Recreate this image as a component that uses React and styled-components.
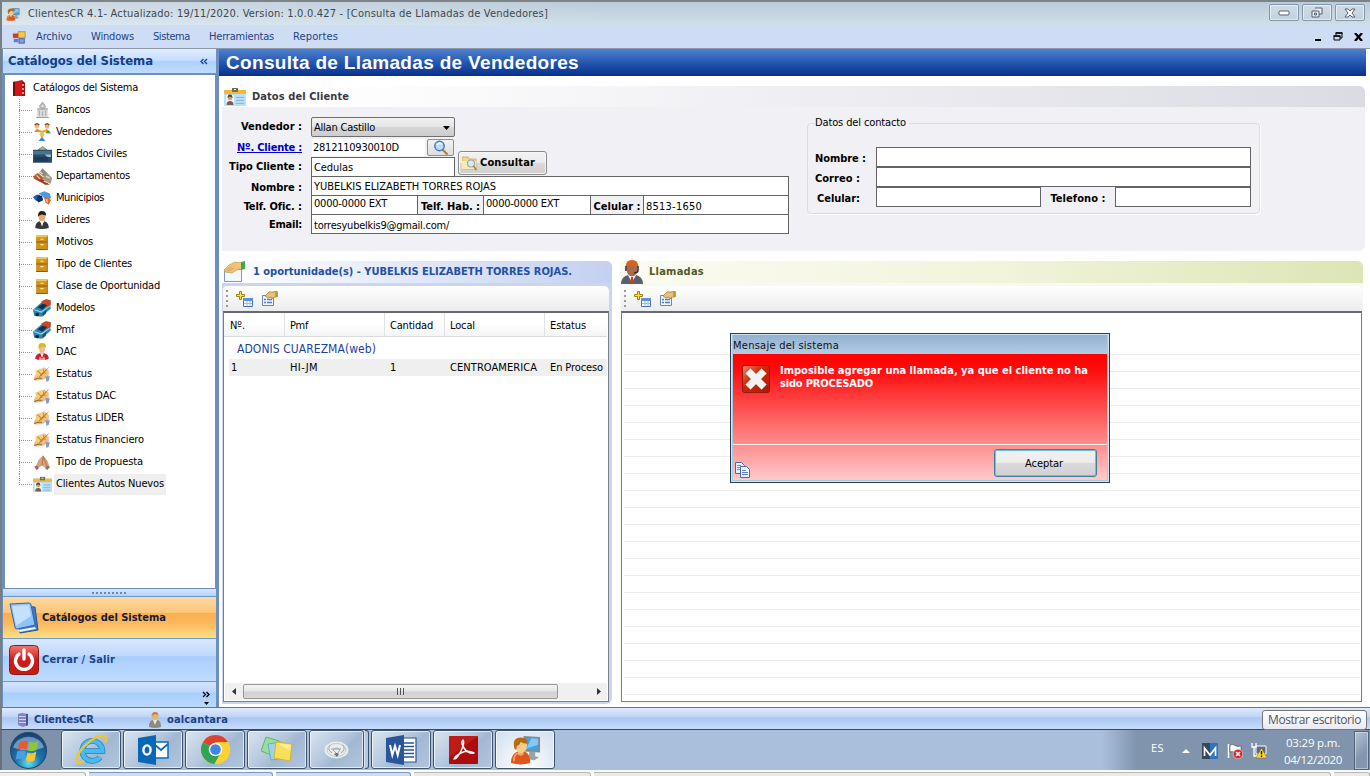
import React, { useLayoutEffect, useRef } from "react";
import styled, { createGlobalStyle, css } from "styled-components";

const Global = createGlobalStyle`
  * { box-sizing: border-box; }
  html, body { margin: 0; padding: 0; overflow: hidden; background: #fff; }
  body { font-family: "DejaVu Sans Condensed", "DejaVu Sans", "Noto Sans", sans-serif; font-size: 11px; color: #000; }
  svg { display: block; flex: none; }
`;

/* ---------- text ---------- */
const Label = styled.span`
  display: inline-block;
  flex: none;
  white-space: pre;
  line-height: ${(p) => p.$lh || 14}px;
  font-size: ${(p) => p.$size || 11}px;
  font-weight: ${(p) => (p.$bold ? 700 : 400)};
  color: ${(p) => p.$color || "#000"};
  ${(p) => p.$font && css`font-family: ${p.$font};`}
  ${(p) => p.$link && css`text-decoration: underline;`}
`;

/* Tracks the text so that it takes the given width. */
function T({ w, children, size, bold, color, font, link, lh }) {
  const ref = useRef(null);
  useLayoutEffect(() => {
    const el = ref.current;
    if (!w || !el) return;
    el.style.letterSpacing = "0px";
    const natural = el.getBoundingClientRect().width;
    el.style.letterSpacing = `${(w - natural) / el.textContent.length}px`;
  }, [w]);
  return (
    <Label ref={ref} $size={size} $bold={bold} $color={color} $font={font} $link={link} $lh={lh}>
      {children}
    </Label>
  );
}

/* ---------- frame ---------- */
const Screen = styled.div`
  position: relative;
  width: 1370px;
  height: 776px;
  overflow: hidden;
  display: flex;
  flex-direction: column;
  background: #fff;
`;
const TitleBar = styled.header`
  flex: none;
  height: 25px;
  border-top: 2px solid #7d8489;
  border-left: 2px solid #777f86;
  padding: 0 5px 0 4px;
  display: flex;
  align-items: center;
  gap: 8px;
  background: linear-gradient(90deg, rgba(255,255,255,.28), rgba(255,255,255,0) 45%), linear-gradient(#bccbd9, #cfdfe9);
`;
const Grow = styled.div`flex: 1; min-width: 0;`;
const WinButtons = styled.div`display: flex; gap: 3px; align-self: flex-start; padding-top: 2px;`;
const WinButton = styled.div`
  width: 30px;
  height: 17px;
  border: 1px solid #8496ac;
  border-radius: 2px;
  box-shadow: inset 0 0 0 1px rgba(255,255,255,.55);
  background: linear-gradient(#cfdbe6, #c3d1df);
  display: flex;
  align-items: center;
  justify-content: center;
`;
const MenuBar = styled.nav`
  flex: none;
  height: 24px;
  border-left: 2px solid #777f86;
  border-bottom: 1px solid #8d99ab;
  background: #cfddf4;
  display: flex;
  align-items: center;
  padding: 0 7px 0 10px;
`;
const MenuItems = styled.div`display: flex; gap: 19px; margin-left: 10px;`;
const MdiButtons = styled.div`display: flex; gap: 11px; align-items: center;`;
const Body = styled.div`flex: none; height: 658px; display: flex; border-left: 2px solid #777f86; background: #fff;`;

/* ---------- sidebar ---------- */
const Sidebar = styled.aside`
  width: 217px;
  flex: none;
  display: flex;
  flex-direction: column;
  background: #6d8fc0;
  padding: 0 3px 0 1px;
`;
const SideHeader = styled.div`
  height: 24px;
  display: flex;
  align-items: center;
  justify-content: space-between;
  padding: 0 8px 0 5px;
  background: linear-gradient(#e2eeff, #c3dcff 50%, #add1ff 52%, #bfdcff);
`;
const Tree = styled.div`
  height: 513px;
  margin: 2px 1px 1px 2px;
  background: #fff;
  padding: 2px 0 0 7px;
`;
const TreeRoot = styled.div`display: flex; align-items: center; height: 22px; gap: 7px;`;
const TreeItem = styled.div`
  display: flex;
  align-items: center;
  height: 22px;
  margin-left: 7px;
  background:
    linear-gradient(90deg, #909090 50%, transparent 50%) 0 11px / 2px 1px repeat-x,
    linear-gradient(#909090 50%, transparent 50%) 0 0 / 1px 2px repeat-y;
  ${(p) => p.$last && css`background: linear-gradient(90deg, #909090 50%, transparent 50%) 0 11px / 2px 1px repeat-x;`}
`;
const TreeStub = styled.div`
  width: 13px;
  align-self: stretch;
  ${(p) => p.$last && css`border-left: 1px dotted #909090; height: 12px;`}
`;
const TreeBody = styled.div`flex: 1; height: 22px; background: #fff; display: flex; align-items: center;`;
const TreeText = styled.div`
  display: flex;
  align-items: center;
  height: 21px;
  margin-left: 2px;
  padding: 0 2px;
  background: ${(p) => (p.$on ? "#efefef" : "transparent")};
`;
const Splitter = styled.div`
  height: 7px;
  background: linear-gradient(#d9e8ff, #b4d2fb);
  display: flex;
  align-items: center;
  justify-content: center;
`;
const Grip = styled.div`
  width: 35px;
  height: 2px;
  background: repeating-linear-gradient(90deg, #6c88b8 0 2px, transparent 2px 4px);
`;
const NavButton = styled.div`
  height: ${(p) => p.$h}px;
  border-top: 1px solid #6e97cb;
  display: flex;
  align-items: center;
  gap: 3px;
  padding-left: 6px;
  background: ${(p) =>
    p.$on
      ? "linear-gradient(#fbd9a4, #fdc578 38%, #fcae4e 40%, #fcb95c 65%, #fbe087)"
      : "linear-gradient(#dbe9fe, #bfd8fc 40%, #a9cefd 42%, #bfdcff)"};
`;
const NavOverflow = styled.div`
  flex: 1;
  border-top: 1px solid #6e97cb;
  display: flex;
  justify-content: flex-end;
  align-items: flex-end;
  padding: 0 6px 2px;
  background: linear-gradient(#d3e4fd, #bcd7fc 40%, #a9cefd 44%, #badafd);
`;

/* ---------- main ---------- */
const Main = styled.main`flex: 1; min-width: 0; padding-right: 4px; display: flex; flex-direction: column;`;
const Banner = styled.div`
  height: 27px;
  flex: none;
  padding: 0 7px;
  display: flex;
  align-items: center;
  background: linear-gradient(#4c80cf, #1f4fa8 60%, #07308c);
`;
const ClientPanel = styled.section`
  height: 165px;
  flex: none;
  margin: 10px 1px 0 3px;
  background: #f0f0f5;
  border-radius: 0 6px 6px 0;
  display: flex;
  flex-direction: column;
`;
const SectionHead = styled.div`
  height: ${(p) => p.$h || 21}px;
  flex: none;
  padding-left: ${(p) => p.$in ?? 1}px;
  display: flex;
  align-items: center;
  gap: 6px;
  border-radius: 0 6px 0 0;
  background: ${(p) => p.$bg};
`;
const FormArea = styled.div`flex: 1; display: flex; padding-top: 9px; padding-left: 9px;`;
const ClientForm = styled.div`width: 558px; display: flex; flex-direction: column;`;
const TopRows = styled.div`display: flex; height: 60px;`;
const Rows = styled.div`width: 224px;`;
const Row = styled.div`display: flex; height: ${(p) => p.$h}px;`;
const Caption = styled.div`
  width: 71px;
  margin-right: 9px;
  flex: none;
  display: flex;
  justify-content: flex-end;
  align-items: center;
  padding-top: ${(p) => p.$down || 0}px;
`;
const Select = styled.div`
  width: 144px;
  height: 20px;
  margin-top: 1px;
  border: 1px solid #6f6f6f;
  border-radius: 2px;
  background: linear-gradient(#f2f2f2, #e6e6e6 48%, #d6d6d6 52%, #cdcdcd);
  display: flex;
  align-items: center;
  justify-content: space-between;
  padding: 1px 4px 0 2px;
`;
const Field = styled.div`
  width: ${(p) => p.$w}px;
  height: ${(p) => p.$h || 20}px;
  flex: none;
  border: 1px solid ${(p) => (p.$plain ? "transparent" : "#646464")};
  background: #fff;
  background-clip: padding-box;
  display: flex;
  align-items: center;
  padding: ${(p) => p.$pad || "2px 0 0 2px"};
`;
const SmallButton = styled.div`
  width: 27px;
  height: 17px;
  margin: 1px 0 0 1px;
  border: 1px solid #8e8f8f;
  border-radius: 2px;
  background: linear-gradient(#f2f2f2, #dedede);
  display: flex;
  align-items: center;
  justify-content: center;
`;
const ConsultButton = styled.div`
  width: 89px;
  height: 24px;
  margin: 35px 0 0 3px;
  border: 1px solid #8a8a8a;
  border-radius: 3px;
  box-shadow: inset 0 0 0 1px #f7f7f7;
  background: linear-gradient(#f2f2f2, #ebebeb 48%, #dadada 52%, #cfcfcf);
  display: flex;
  align-items: center;
  gap: 2px;
  padding-left: 3px;
`;
const InlineCaption = styled.div`
  width: ${(p) => p.$w}px;
  height: 20px;
  flex: none;
  display: flex;
  align-items: center;
  justify-content: center;
  padding-top: 3px;
  border: solid #646464;
  border-width: ${(p) => (p.$bare ? "0" : "1px 0")};
`;
const ContactBox = styled.fieldset`
  width: 453px;
  height: 98px;
  margin: 0 0 0 18px;
  border: 1px solid #dcdde2;
  border-radius: 4px;
  box-shadow: 1px 1px 0 #fff;
  padding: 17px 0 0 7px;
  legend { padding: 0 3px 0 0; height: 14px; display: flex; }
`;
const ContactRow = styled.div`display: flex; height: 20px; `;
const ContactCaption = styled.div`width: 61px; padding: 5px 0 0 ${(p) => p.$in || 0}px;`;

const Panes = styled.div`flex: 1; display: flex; gap: 8px; margin: 10px 0 0 3px;`;
const DealPane = styled.section`
  width: 390px;
  height: 443px;
  border-radius: 0 6px 6px 0;
  background: #cbd5ef;
  padding-bottom: 2px;
  display: flex;
  flex-direction: column;
`;
const CallPane = styled.section`
  width: 743px;
  height: 443px;
  padding-bottom: 2px;
  display: flex;
  flex-direction: column;
  background: #f9f9f4;
`;
const Toolbar = styled.div`
  height: 25px;
  flex: none;
  margin: 3px ${(p) => p.$r || 3}px 0 1px;
  border-radius: 4px 5px 0 0;
  background: linear-gradient(#fff, #f5f5f5 50%, #ececec);
  display: flex;
  align-items: center;
  padding-left: 3px;
  gap: 8px;
`;
const Dots = styled.div`
  width: 2px;
  height: 17px;
  background: repeating-linear-gradient(#999 0 2px, transparent 2px 5px);
`;
const List = styled.div`
  flex: 1;
  margin: 0 ${(p) => p.$r || 3}px 0 1px;
  border: 1px solid #7b7e85;
  border-top: 2px solid #666a70;
  background: #fff;
  display: flex;
  flex-direction: column;
`;
const HeadRow = styled.div`
  height: 24px;
  margin-right: 1px;
  padding-left: 1px;
  display: flex;
  background: linear-gradient(#fff 45%, #f4f5f7);
  border-bottom: 1px solid #dcdcdc;
`;
const Cell = styled.div`
  width: ${(p) => p.$w}px;
  flex: none;
  overflow: hidden;
  display: flex;
  align-items: center;
  padding-left: ${(p) => p.$in ?? 5}px;
  padding-top: ${(p) => (p.$head ? 3 : 1)}px;
  border-right: 1px solid ${(p) => (p.$head && !p.$end ? "#e0e1e4" : "transparent")};
`;
const GroupRow = styled.div`height: 22px; padding: 1px 0 0 13px; display: flex; align-items: center;`;
const DataRow = styled.div`height: 17px; margin-left: 5px; margin-right: 1px; background: #efefef; display: flex;`;
const ScrollBar = styled.div`
  height: 17px;
  background: #f0f0f0;
  display: flex;
  align-items: center;
  margin: 0 1px 1px;
`;
const ScrollArrow = styled.div`width: 18px; display: flex; justify-content: center;`;
const Thumb = styled.div`
  width: 315px;
  height: 15px;
  border: 1px solid #979797;
  border-radius: 2px;
  background: linear-gradient(#f5f5f5, #e6e6e6 48%, #d2d2d2 52%, #d8d8d8);
  display: flex;
  align-items: center;
  justify-content: center;
`;
const Ruled = styled.div`
  flex: 1;
  margin: 41px 1px 5px 2px;
  background: repeating-linear-gradient(#ececec 0 1px, transparent 1px 17px);
`;

/* ---------- status and taskbar ---------- */
const StatusBar = styled.footer`
  flex: none;
  height: 23px;
  border-top: 1px solid #5c779f;
  border-left: 2px solid #777f86;
  border-bottom: 1px solid #33496a;
  background: linear-gradient(#e0ebfd, #c0d6f7 40%, #a9c7f2 48%, #c6dcfb);
  display: flex;
  align-items: center;
  padding: 3px 0 0 15px;
`;
const StatusItem = styled.div`display: flex; align-items: center; gap: ${(p) => p.$gap}px; width: ${(p) => p.$w}px;`;
const TaskBar = styled.div`
  flex: none;
  height: 40px;
  border-left: 2px solid #66707c;
  display: flex;
  background: linear-gradient(90deg, #7f92ab 0 59px, #a9c0dc 60px 1100px, #8094ae 1135px);
`;
const Start = styled.div`width: 59px; display: flex; justify-content: center; align-items: center; padding-right: 6px;`;
const TaskButton = styled.div`
  width: ${(p) => p.$w || 60}px;
  height: 39px;
  margin-right: ${(p) => p.$mr ?? 2}px;
  border: 1px solid #40536c;
  border-radius: 3px;
  box-shadow: inset 0 0 0 1px rgba(255,255,255,.65);
  background: ${(p) =>
    p.$active
      ? "radial-gradient(circle at 50% 90%, #fff, rgba(255,255,255,0) 90%), #d5e2f0"
      : "linear-gradient(135deg, #d9e4f0, #b4c7dd 45%, #a2b8d2 60%, #b2c6de)"};
  display: flex;
  align-items: center;
  justify-content: center;
`;
const StackEdge = styled.div`
  width: 5px;
  height: 39px;
  margin-right: 2px;
  border: 1px solid #40536c;
  border-left-color: #dbe6f2;
  border-radius: 0 3px 3px 0;
  background: #b5c8de;
`;
const Tray = styled.div`display: flex; align-items: center; color: #fff; padding-top: 1px;`;
const TrayIcon = styled.div`margin-left: ${(p) => p.$l}px; padding-bottom: ${(p) => p.$b || 0}px;`;
const Clock = styled.div`width: 66px; margin: 0 8px 0 13px; display: flex; flex-direction: column; align-items: center;`;
const PeekButton = styled.div`
  width: 15px;
  margin-right: 1px;
  height: 39px;
  border: 1px solid #51637b;
  box-shadow: inset 0 0 0 1px rgba(255,255,255,.4);
  background: linear-gradient(135deg, #b5c3d4, #8396ae 60%);
`;
const Strip = styled.div`
  flex: 1;
  border-top: 2px solid #f8f9fb;
  display: flex;
  gap: 3px;
  background: #fff;
`;
const StripTab = styled.div`
  width: ${(p) => p.$w}px;
  border-top: 1px solid ${(p) => p.$line};
  border-right: 1px solid ${(p) => p.$line};
  border-radius: 0 3px 0 0;
  background: ${(p) => p.$bg};
`;

/* ---------- overlays ---------- */
const Tip = styled.div`
  position: absolute;
  left: 1262px;
  top: 710px;
  width: 105px;
  height: 20px;
  border: 1px solid #767676;
  border-radius: 3px;
  background: linear-gradient(#fff, #e9eaf2);
  display: flex;
  align-items: center;
  padding-left: 5px;
`;
const Dialog = styled.div`
  position: absolute;
  left: 730px;
  top: 333px;
  width: 380px;
  height: 150px;
  border: 1px solid #2c3a49;
  background: #a5cbe2;
  box-shadow: inset 0 0 0 1px #cfe6f2;
  padding: 1px 2px 2px;
  display: flex;
  flex-direction: column;
`;
const DialogTitle = styled.div`
  height: 19px;
  display: flex;
  align-items: center;
  padding: 2px 0 0 0;
  background: linear-gradient(#93b0d1, #b2cce4);
`;
const DialogBody = styled.div`
  flex: 1;
  background: linear-gradient(#ff0000, #fe0b0b 12%, #ff8a8a 70%, #ffcaca);
  display: flex;
  flex-direction: column;
`;
const DialogMessage = styled.div`
  height: 91px;
  border-bottom: 1px solid #fff0f0;
  display: flex;
  padding: 11px 0 0 9px;
  gap: 10px;
`;
const MessageText = styled.div`display: flex; flex-direction: column; align-items: flex-start; margin-top: -1px;`;
const DialogFoot = styled.div`flex: 1; display: flex; justify-content: space-between; padding: 4px 10px 0 2px;`;
const AcceptButton = styled.div`
  width: 103px;
  height: 28px;
  border: 1px solid #3f7f9f;
  border-radius: 3px;
  box-shadow: inset 0 0 0 1px #5fc6e8;
  background: linear-gradient(#f3f3f3, #ebebeb 48%, #dadada 52%, #d0d0d0);
  display: flex;
  align-items: center;
  justify-content: center;
  padding: 1px 3px 0 0;
`;
const CopyIconSlot = styled.div`padding-top: 13px;`;

/* ---------- icons ---------- */
const Svg = ({ w = 16, h = w, v = 16, children }) => (
  <svg width={w} height={h} viewBox={typeof v === "string" ? v : `0 0 ${v} ${v}`}>{children}</svg>
);

const BookIcon = () => (
  <Svg w={14} h={17} v="0 0 14 17">
    <path d="M1 2 10 0v16H1z" fill="#d21518" />
    <path d="M1 2 3 1.500V16H1z" fill="#760b0c" />
    <path d="m10 0 3 3v13H10z" fill="#9c1412" />
    <path d="M11 4v2m0 2v2m0 2v2" stroke="#e8c9a0" strokeWidth="1.500" />
  </Svg>
);
const PcUser = ({ w = 16 }) => (
  <Svg w={w} v={32}>
    <path d="m14 2 17 1v16l-17-1z" fill="#7e8b95" />
    <path d="m16 4 13 1v12l-13-1z" fill="#43a3e6" />
    <path d="m22 4.500 7 .5v6l-12 4z" fill="#a5ddff" opacity=".65" />
    <path d="m20 18 6 0 0 5 4 1-5 3-6-1z" fill="#98a2a8" />
    <path d="M1 30q0-10 7-12h7q6 2 6 12-10 3-20 0" fill="#e0561c" />
    <path d="M4 28q0-7 4-8" stroke="#f79a5a" strokeWidth="2" fill="none" />
    <path d="M8 17h6v4q-3 3-6 0z" fill="#eeb16a" />
    <ellipse cx="11.500" cy="12" rx="6" ry="7.500" fill="#f8cd8a" />
    <path d="M5 16Q1 4 11 3.500q8 0 7 6.500-5 0-7-2-1 4-4 4l-.5 4z" fill="#b9690f" />
  </Svg>
);
const FormIcon = () => (
  <Svg w={14}>
    <rect x="7" y="2" width="8" height="7" fill="#f6c84c" stroke="#c48a16" />
    <rect x="1" y="4" width="6" height="5" fill="#cf3b28" />
    <rect x="2" y="10" width="5" height="4" fill="#5b7fd2" />
    <rect x="8" y="10" width="6" height="5" fill="#7fa0e8" stroke="#3759ad" />
  </Svg>
);
const BankIcon = () => (
  <Svg w={17}>
    <path d="M3 6 8 3l5 3v9H3z" fill="#dadadd" />
    <path d="M5 8v5m3-4v4m3-5v5" stroke="#a7a9b0" />
    <path d="m8 0 3 4-3 3-3-3z" fill="#bcbdc3" stroke="#90919a" strokeWidth=".6" />
    <path d="M3 6.500h10M2 14.500h12" stroke="#9c9ca2" />
    <circle cx="8" cy="4" r="1" fill="#eee" />
  </Svg>
);
const TeamIcon = () => (
  <Svg w={18}>
    <path d="M8 8 3 6m5 2 5-2M8 8v5" stroke="#e3a733" strokeWidth="2" />
    <circle cx="3.500" cy="3" r="2" fill="#f3b985" /><circle cx="12.500" cy="3" r="2" fill="#eeb280" />
    <path d="M1.500 2q2-2.500 4 0M10.500 2q2-2.500 4 0" stroke="#81501a" strokeWidth="1.300" fill="none" />
    <path d="M1 8q2.500-5 5 0z" fill="#d8912c" /><path d="M11 9q2-5 5 0z" fill="#4a9e3a" />
    <circle cx="8" cy="10" r="2" fill="#f1c15a" /><path d="M5 16q3-6 6 0z" fill="#3a8ad8" />
  </Svg>
);
const CaseIcon = () => (
  <Svg w={19}>
    <path d="M0 4h4l4-3 4 3h4v11H0z" fill="#2c4f68" />
    <path d="M0 5h15v3H0z" fill="#48758c" />
    <path d="m5 4 3-3 3 3z" fill="#a9b88b" />
    <path d="M10 8h5v2h-3z" fill="#9fc2cf" />
    <path d="M1 10h12v4H1z" fill="#1d3a5c" />
  </Svg>
);
const HousesIcon = () => (
  <Svg w={19}>
    <path d="m0 8 4-3 5 4-2 4-6-3z" fill="#b7552f" /><path d="m5 5 3-4 4 4v5z" fill="#8f8b78" />
    <path d="m8 9 4-4 4 4-1 5-6-2z" fill="#a89a86" />
    <path d="m3 10 6 1 5 4-4 0z" fill="#9c3a27" /><path d="M6 4l2 2m3 2 3 1" stroke="#ece3c8" />
    <path d="M3 7l3 3m3 2 3 1" stroke="#f0d7ac" />
  </Svg>
);
const CarsIcon = () => (
  <Svg w={18}>
    <path d="m0 7 3-2h3l2 3-2 3-4-1z" fill="#1d63b8" /><path d="m5 4 5-2 5 2 1 4-5 1-3-3z" fill="#4c9ade" />
    <path d="m4 6 4 0 1 4-4 2-2-2z" fill="#0c2f73" /><path d="m10 8 4-1 2 3-2 4-3-2z" fill="#d86b32" />
    <path d="m11 9 2 0v4z" fill="#f5d0a0" />
  </Svg>
);
const LeaderIcon = () => (
  <Svg w={18}>
    <ellipse cx="8" cy="5" rx="3" ry="4" fill="#e5a978" />
    <path d="M4.500 5Q4 0 8 0t3.500 4L8 3 5.500 4z" fill="#2c1c15" />
    <path d="M2 15q0-5 4-6l2 3 2-3q4 1 4 6-6 2-12 0" fill="#35353b" />
    <path d="m6.500 9 1.500 5 1.500-5z" fill="#fff" />
  </Svg>
);
const CabinetIcon = () => (
  <Svg w={17}>
    <path d="M2 1h11v14H2z" fill="#d0921a" /><path d="M2 1h11v2H2z" fill="#f0c65a" />
    <path d="M2 7.500h11M2 14.500h11" stroke="#8d5c09" /><path d="M6 5h3m-3 5h3" stroke="#fbe9a7" />
    <path d="M12.500 2v13" stroke="#b77d10" />
  </Svg>
);
const AutoIcon = () => (
  <Svg w={19}>
    <path d="m0 9 7-6 7 0 1 5-8 7-6-1z" fill="#2d7fae" /><path d="m7 2 4-2 4 1v4l-3 2-4-1z" fill="#c04a2a" />
    <path d="m4 7 4-3 4 1-4 4z" fill="#0e3350" /><path d="m1 9 6 2 7-5" stroke="#8ed1ee" fill="none" />
    <circle cx="3.500" cy="13" r="1.500" fill="#1c2733" /><path d="m8 12 3-3v3l-3 3z" fill="#164f7c" />
  </Svg>
);
const DacIcon = () => (
  <Svg w={18}>
    <ellipse cx="8" cy="5" rx="2.600" ry="4" fill="#f1bd8c" /><path d="M5 5Q4 0 8 0t3.500 4L8 3z" fill="#d9b81e" />
    <path d="M2 14q0-4 4-5h4q4 1 4 5l-3 1H5z" fill="#c9203a" /><path d="m6.500 9 1.500 4 1.500-4z" fill="#fff" />
    <path d="m5 15 1-3 2 2 2-2 1 3z" fill="#f2a37d" />
  </Svg>
);
const SignIcon = () => (
  <Svg w={18}>
    <path d="m1 11 3-6 6-3 4 3 0 5-5 3-7 1z" fill="#f0bd85" /><path d="m2 5 5-2 4 2-4 5-4 0z" fill="#f3d078" />
    <path d="m15 1-8 7-2 3 3-2z" fill="#b57a13" /><path d="m4 5 4 4M9 4l2 4" stroke="#c98836" strokeWidth=".9" />
    <path d="m11 10 4 0-1 4-2 1z" fill="#7f9ecb" /><path d="M1 13q4-2 7-1" stroke="#a56e29" fill="none" />
  </Svg>
);
const PrayIcon = () => (
  <Svg w={18}>
    <path d="m2 13 3-7 4-4 4 5 2 6-3 1-4-3-4 3z" fill="#dba27a" /><path d="m9 3-1 8m1-8 3 8" stroke="#b07a54" />
    <path d="m1 12 3-1 1 3-2 1zM15 12l-3-1-1 3 2 1z" fill="#8a7470" />
  </Svg>
);
const IdCard = ({ w = 19 }) => (
  <Svg w={w} h={w * 0.86} v="0 0 22 19">
    <path d="M0 3h22v16H0z" fill="#b9e0f5" /><path d="M0 3h22v4H0z" fill="#f5b63a" />
    <path d="M8 1h6v4H8z" fill="#6d7254" /><path d="M10 2h2v1h-2z" fill="#fff" />
    <path d="M2 8h8v10H2z" fill="#e9f5fb" /><circle cx="6" cy="11" r="2.200" fill="#dc9b6a" />
    <path d="M3.500 11q0-3.500 2.500-3.500T8.500 11L6 9.500z" fill="#6f3c1b" /><path d="M2.500 18q0-4 3.500-4t3.500 4z" fill="#7b5b4a" />
    <path d="M12 10.500h8m-8 3h8m-8 3h8" stroke="#7db8d8" />
  </Svg>
);
const CatalogIcon = () => (
  <Svg w={30} h={32} v="0 0 30 32">
    <path d="m8 4 18 1 3 23-18 3z" fill="#3d79c9" stroke="#23549f" /><path d="m9 28 17-3 1 2-16 3z" fill="#eaf4ff" />
    <path d="m1 2 19-1q2 0 2 2l4 20-18 4q-2 0-2-2z" fill="#91c3f5" stroke="#2e66b4" />
    <path d="m3 4 17-1 2 11-15 10z" fill="#d4eaff" opacity=".75" />
  </Svg>
);
const PowerIcon = () => (
  <Svg w={30} v={30}>
    <defs><linearGradient id="pw" x2="0" y2="1"><stop stopColor="#ef7a70" /><stop offset=".5" stopColor="#cf1b17" /><stop offset="1" stopColor="#c51a15" /></linearGradient></defs>
    <rect x=".5" y=".5" width="29" height="29" rx="4" fill="url(#pw)" stroke="#8f1a17" />
    <path d="M10 9a8.500 8.500 0 1 0 10 0" stroke="#fff" strokeWidth="3.400" fill="none" strokeLinecap="round" />
    <path d="M15 5v9" stroke="#fff" strokeWidth="3.400" strokeLinecap="round" />
  </Svg>
);
const Chevrons = () => (
  <Svg w={8} h={14} v="0 0 8 14">
    <path d="m1 1 2.500 2.500L1 6m3.500-5L7 3.500 4.500 6" fill="none" stroke="#000" strokeWidth="1.300" /><path d="M2 11h5l-2.500 3z" />
  </Svg>
);
const Lens = () => (
  <Svg w={16}>
    <path d="m9.500 9.500 5 5" stroke="#b07c3c" strokeWidth="2.200" /><circle cx="6.500" cy="6" r="4.700" fill="#b9dcf8" stroke="#4878bd" strokeWidth="1.500" />
    <path d="M4 5q2-3 5-1" stroke="#fff" strokeWidth="1.500" fill="none" />
  </Svg>
);
const FolderLens = () => (
  <Svg w={16}>
    <path d="M0 2h6l1 2h7v10H0z" fill="#efd890" stroke="#c9ab56" strokeWidth=".8" /><path d="M0 6h14v8H0z" fill="#f8e9b5" />
    <circle cx="9" cy="8.500" r="3.500" fill="#dce9f1" stroke="#9ba8ad" strokeWidth="1.200" /><path d="m11.500 11 3 4" stroke="#aa7f40" strokeWidth="1.600" />
  </Svg>
);
const HandPaper = () => (
  <Svg w={24} h={22} v="0 0 24 22">
    <path d="M1.500 8.500h17v12h-17z" fill="#f5f9fd" stroke="#8199b3" />
    <path d="M1 9 6 4l6-3 8 1-1 6-5 1-5 3-7-1z" fill="#f2c177" stroke="#c38e42" strokeWidth=".6" />
    <path d="m3 9 6-3m-4 4 6-3" stroke="#d39b55" strokeWidth=".8" /><path d="m18 1 4-1v8l-4 1z" fill="#39ab46" />
  </Svg>
);
const Agent = () => (
  <Svg w={22} h={24} v="0 0 22 24">
    <path d="M0 24q0-7 7-9h8q7 2 7 9z" fill="#56616d" /><path d="m7 15 4 8 4-8z" fill="#fff" /><path d="m10 17-1 7h4l-1-7z" fill="#cd3c22" />
    <ellipse cx="11" cy="9" rx="5.500" ry="7.500" fill="#a9694b" /><path d="M5 8Q4 0 11 0t6 8l-2-3q-4 2-8 0z" fill="#d9601e" />
    <path d="M5 6v5m12-5v4q0 3-4 3" stroke="#3a2a28" strokeWidth="1.500" fill="none" />
  </Svg>
);
const AddTable = () => (
  <Svg w={17} h={16} v="0 0 17 16">
    <path d="M3.500.5h2v3h3v2h-3v3h-2v-3h-3v-2h3z" fill="#f7df45" stroke="#a18211" />
    <path d="M7.500 7.500h9v8h-9z" fill="#fff" stroke="#4570bb" /><path d="M7 7h10v3H7z" fill="#5c91e0" /><path d="M8 12.500h8M11 10v5m3-5v5" stroke="#9dbce9" />
  </Svg>
);
const Props = () => (
  <Svg w={17} h={16} v="0 0 17 16">
    <path d="M1.500 4.500h11v10h-11z" fill="#f2f6fc" stroke="#6d86ae" /><path d="M3 8.500h2m1 0h5m-8 3h2m1 0h5" stroke="#4d7fcf" strokeWidth="1.500" />
    <path d="m4 5 4-4h4l4-1v6l-3 0-2 2-1-2-3 1z" fill="#e6c379" stroke="#9a752c" strokeWidth=".7" /><path d="m14 0 3 1v5h-3z" fill="#bba32c" />
  </Svg>
);
const ErrorIcon = () => (
  <Svg w={28} v={28}>
    <defs><linearGradient id="er" x1="0" x2="1" y2="1"><stop stopColor="#f3886a" /><stop offset=".4" stopColor="#d3290c" /><stop offset="1" stopColor="#b51402" /></linearGradient></defs>
    <rect x=".5" y=".5" width="27" height="27" rx="2" fill="url(#er)" stroke="#901b0a" />
    <path d="m8.500 3.500 5.500 5.500 5.500-5.500 5 5-5.500 5.500 5.500 5.500-5 5-5.500-5.500-5.500 5.500-5-5 5.500-5.500-5.500-5.500z" fill="#f2f2f2" stroke="#b9b9b9" strokeWidth=".6" />
  </Svg>
);
const CopyIcon = () => (
  <Svg w={15} h={16} v="0 0 15 16">
    <path d="M.5.5h6l3 3v8h-9z" fill="#e7effc" stroke="#4868ac" /><path d="M2 3.500h4m-4 2h5m-5 2h5" stroke="#6b8dca" />
    <path d="M5.500 4.500h6l3 3v8h-9z" fill="#f0f5fe" stroke="#4868ac" /><path d="M7 8.500h4m-4 2h6m-6 2h6" stroke="#5b7fc4" />
  </Svg>
);
const DbIcon = () => (
  <Svg w={12} h={14} v="0 0 12 14">
    <path d="m1 1 4-1 6 1v11l-5 2-5-2z" fill="#8583c0" /><path d="M2 3.500h7M2 6.500h7M2 9.500h7" stroke="#cfcff0" /><path d="m9 1 2 0v11l-2 1z" fill="#514f90" />
  </Svg>
);
const UserIcon = () => (
  <Svg w={12} h={16} v="0 0 12 16">
    <circle cx="6" cy="4" r="3.500" fill="#e5b472" /><path d="M2.500 4Q3 0 6 0t3.500 3L6 2z" fill="#b98435" />
    <path d="M0 15q0-7 4-7h4q4 0 4 7-6 2-12 0" fill="#8d8a84" /><path d="m4 8 2 5 2-5z" fill="#f3ead6" />
  </Svg>
);
const Orb = () => (
  <Svg w={37} v={36}>
    <defs>
      <radialGradient id="orb" cx=".5" cy=".85" r=".85"><stop stopColor="#5fe0f4" /><stop offset=".4" stopColor="#1c74b0" /><stop offset="1" stopColor="#17406f" /></radialGradient>
    </defs>
    <circle cx="18" cy="18" r="17.500" fill="url(#orb)" stroke="#284765" /><path d="M3 15a15.500 14 0 0 1 30 0q-15 6-30 0" fill="#d5e6f3" opacity=".45" />
    <path d="M9 11q4-4 8.500-2L16 17q-4-2-8.500 0z" fill="#ea5a2a" /><path d="M19 9.500q4 2 8.500-1L26 17q-4 3-8.500 1z" fill="#8cc63e" />
    <path d="M7 19q4-2 8.500 0L14 27q-4-2-8.500 0z" fill="#46a0e2" /><path d="M17 20q4 2 8.500-1L24 27.500q-4 3-8.500 0z" fill="#fbc530" />
  </Svg>
);
const IeIcon = () => (
  <Svg w={33} v={32}>
    <path d="M8 17.500h18.500a9.700 9.700 0 1 0-2.200 6" fill="none" stroke="#1d86c8" strokeWidth="5.600" />
    <path d="M8 17.500h18.500a9.700 9.700 0 1 0-2.200 6" fill="none" stroke="#49b9ee" strokeWidth="4.200" />
    <path d="M9 27q-7 4-7.500-.5Q2 19 11 11T26 2.500q6 0 3 7" fill="none" stroke="#f5c32c" strokeWidth="2.300" />
  </Svg>
);
const OutlookIcon = () => (
  <Svg w={31} h={30} v="0 0 31 30">
    <path d="M16 7h14v16H16z" fill="#fff" stroke="#0b6cbd" strokeWidth="1.500" /><path d="m16 9 7 6 7-6" fill="none" stroke="#0b6cbd" strokeWidth="1.800" />
    <path d="m0 3 18-3v30L0 27z" fill="#0a67b8" /><ellipse cx="9" cy="15" rx="3.600" ry="4.600" fill="none" stroke="#fff" strokeWidth="2.400" />
  </Svg>
);
const ChromeIcon = () => (
  <Svg w={31} v={32}>
    <circle cx="16" cy="16" r="15" fill="#f9cd2e" /><path d="M16 16 3 8.500A15 15 0 0 1 29 8.500H16z" fill="#dc4234" />
    <path d="M3 8.500A15 15 0 0 0 15 31l6.500-12L16 16z" fill="#32a352" /><path d="M29 8.500H16L21 21 15 31A15 15 0 0 0 29 8.500" fill="#fbd22f" />
    <circle cx="16" cy="16" r="7" fill="#fff" /><circle cx="16" cy="16" r="5.500" fill="#4285e8" />
  </Svg>
);
const NotesIcon = () => (
  <Svg w={32} h={28} v="0 0 32 28">
    <path d="m5 1 13 4-5 15L0 15z" fill="#99dc9b" stroke="#64b667" /><path d="m7 8 14-2 3 16-14 2z" fill="#9dd2ef" stroke="#67abd2" />
    <path d="m15 6 16 2-2 17-16-3z" fill="#f9df5b" stroke="#d9b32f" /><path d="m16 7 14 2-1 6z" fill="#fff2a4" opacity=".7" />
  </Svg>
);
const RadarIcon = () => (
  <Svg w={25} h={18} v="0 0 25 18">
    <ellipse cx="12.500" cy="9" rx="12" ry="8.500" fill="#e8eced" /><ellipse cx="12.500" cy="9" rx="9.500" ry="6.500" fill="none" stroke="#c3c8c9" />
    <path d="M6 4q-3 5 2 8M19 4q3 5-2 8M9 9q3-4 7 0l-3 4zM7 8h10" fill="none" stroke="#a0a6a7" /><path d="M10 13q3-2 5 0l-2 3z" fill="#6e7576" />
  </Svg>
);
const WordIcon = () => (
  <Svg w={31} h={30} v="0 0 31 30">
    <path d="M16 3h14v24H16z" fill="#fff" stroke="#2a5699" strokeWidth="1.200" /><path d="M18 8h10m-10 3.500h10M18 15h10m-10 3.500h10M18 22h10" stroke="#2a5699" strokeWidth="1.500" />
    <path d="m0 3 18-3v30L0 27z" fill="#2a5699" /><path d="m4 10 2.300 10L9 11l2.700 9L14 10" fill="none" stroke="#fff" strokeWidth="2" />
  </Svg>
);
const PdfIcon = () => (
  <Svg w={29} h={28} v="0 0 29 28">
    <rect width="29" height="28" rx="1" fill="#ac0c0c" /><path d="M0 0h29L0 22z" fill="#d02a20" opacity=".55" />
    <path d="M5 23q2-4 8-6.500t12 .5q-6 1-10-5t-1-8q2 3-2 11T5 23z" fill="none" stroke="#fff" strokeWidth="1.500" strokeLinejoin="round" />
  </Svg>
);
const MIcon = () => (
  <Svg w={16}>
    <path d="M0 0h16v16H0z" fill="#37465a" /><path d="M8 0h8v16H8z" fill="#2f74c1" /><path d="M2.500 13V5l5.500 7 5.500-7v8" fill="none" stroke="#fff" strokeWidth="1.700" />
  </Svg>
);
const FlagIcon = () => (
  <Svg w={16}>
    <path d="M1.500 1v14" stroke="#fff" strokeWidth="1.500" /><path d="M3 2q3-1 5 .5t6 .5v7q-3 1-6-.5T3 9z" fill="#fff" stroke="#3b4655" strokeWidth=".6" />
    <circle cx="11" cy="11" r="4.800" fill="#d9242b" stroke="#fff" strokeWidth=".5" /><path d="m9 9 4 4m0-4-4 4" stroke="#fff" strokeWidth="1.600" />
  </Svg>
);
const NetIcon = () => (
  <Svg w={16}>
    <path d="M5 3h10v8H5z" fill="#5c6b7d" stroke="#fff" /><path d="M1 0v4h4V0M3 4v9h6" fill="none" stroke="#fff" strokeWidth="1.300" />
    <path d="m10.500 5 5.500 10H5z" fill="#ffd92b" stroke="#8b6c0a" strokeWidth=".5" /><path d="M10.500 8v3.500m0 1v1.500" stroke="#222" strokeWidth="1.400" />
  </Svg>
);
const Arrow = ({ d, w = 5, h = 7, color = "#333" }) => (
  <Svg w={w} h={h} v={`0 0 ${w} ${h}`}><path d={d} fill={color} /></Svg>
);

/* ---------- data ---------- */
const treeItems = [
  ["Bancos", 34, BankIcon], ["Vendedores", 56, TeamIcon], ["Estados Civiles", 71, CaseIcon],
  ["Departamentos", 74, HousesIcon], ["Municipios", 48, CarsIcon], ["Lideres", 34, LeaderIcon],
  ["Motivos", 37, CabinetIcon], ["Tipo de Clientes", 76, CabinetIcon], ["Clase de Oportunidad", 104, CabinetIcon],
  ["Modelos", 39, AutoIcon], ["Pmf", 18, AutoIcon], ["DAC", 21, DacIcon], ["Estatus", 36, SignIcon],
  ["Estatus DAC", 60, SignIcon], ["Estatus LIDER", 68, SignIcon], ["Estatus Financiero", 88, SignIcon],
  ["Tipo de Propuesta", 87, PrayIcon], ["Clientes Autos Nuevos", 108, IdCard],
];
const menus = [["Archivo", 36], ["Windows", 43], ["Sistema", 37], ["Herramientas", 65], ["Reportes", 45]];
const columns = [["Nº.", 15, 60], ["Pmf", 18, 100], ["Cantidad", 43, 60], ["Local", 25, 100], ["Estatus", 36, 60]];
const values = [["1", 5, 56, 2], ["HI-JM", 28, 100], ["1", 5, 60], ["CENTROAMERICA", 87, 100], ["En Proceso", 53, 60]];
const IconSlot = styled.div`width: 20px; height: 20px; display: flex; align-items: center; justify-content: center;`;

export default function App() {
  return (
    <Screen>
      <Global />
      <TitleBar>
        <PcUser w={14} />
        <T w={520} color="#3d474f">ClientesCR 4.1- Actualizado: 19/11/2020. Version: 1.0.0.427 - [Consulta de Llamadas de Vendedores]</T>
        <Grow />
        <WinButtons>
          <WinButton><Svg w={12} h={6} v="0 0 12 6"><rect x="1" y="1" width="10" height="4" rx="1" fill="#fff" stroke="#566170" /></Svg></WinButton>
          <WinButton><Svg w={12} h={11} v="0 0 12 11"><path d="M4 1h7v6H8M1 4h7v6H1zM3.500 6h2v2h-2z" fill="#eef2f5" stroke="#566170" /></Svg></WinButton>
          <WinButton><Svg w={12} h={10} v="0 0 12 10"><path d="M1 1h3l2 2 2-2h3L8 5l3 4H8L6 7 4 9H1l3-4z" fill="#fff" stroke="#566170" /></Svg></WinButton>
        </WinButtons>
      </TitleBar>
      <MenuBar>
        <FormIcon />
        <MenuItems>{menus.map(([t, w]) => <T key={t} w={w} color="#1b4384">{t}</T>)}</MenuItems>
        <Grow />
        <MdiButtons>
          <Svg w={8} h={9} v="0 0 8 9"><path d="M1 7h6v2H1z" /></Svg>
          <Svg w={10} h={9} v="0 0 10 9"><path d="M3 3V1h6v5H7M1 4h6v4H1z" fill="none" stroke="#000" /><path d="M2.500 1h7M.5 4h7" stroke="#000" strokeWidth="1.600" /></Svg>
          <Svg w={9} h={8} v="0 0 9 8"><path d="m1 0 7 8m0-8-7 8" stroke="#000" strokeWidth="2.300" /></Svg>
        </MdiButtons>
      </MenuBar>

      <Body>
        <Sidebar>
          <SideHeader>
            <T w={145} size={13} bold color="#123f86">Catálogos del Sistema</T>
            <Svg w={8} h={7} v="0 0 8 7"><path d="M3.500 1 1 3.500 3.500 6M7 1 4.500 3.500 7 6" fill="none" stroke="#123f86" strokeWidth="1.300" /></Svg>
          </SideHeader>
          <Tree>
            <TreeRoot><BookIcon /><T w={105}>Catálogos del Sistema</T></TreeRoot>
            {treeItems.map(([t, w, Icon], i) => {
              const last = i === treeItems.length - 1;
              return (
                <TreeItem key={t} $last={last}>
                  <TreeStub $last={last} />
                  <TreeBody>
                    <IconSlot><Icon /></IconSlot>
                    <TreeText $on={last}><T w={w}>{t}</T></TreeText>
                  </TreeBody>
                </TreeItem>
              );
            })}
          </Tree>
          <Splitter><Grip /></Splitter>
          <NavButton $h={42} $on><CatalogIcon /><T w={124} bold color="#101b3c">Catálogos del Sistema</T></NavButton>
          <NavButton $h={43}><PowerIcon /><T w={73} bold color="#1b4384">Cerrar / Salir</T></NavButton>
          <NavOverflow><Chevrons /></NavOverflow>
        </Sidebar>

        <Main>
          <Banner><T w={353} size={19} lh={24} bold color="#fff" font='"Liberation Sans", Arial, sans-serif'>Consulta de Llamadas de Vendedores</T></Banner>
          <ClientPanel>
            <SectionHead $in={2} $bg="linear-gradient(90deg, #fff 8%, #dbdbe4)">
              <IdCard w={22} /><T w={97} bold color="#3a3a3f">Datos del Cliente</T>
            </SectionHead>
            <FormArea>
              <ClientForm>
                <TopRows>
                  <Rows>
                    <Row $h={22}><Caption><T w={61} bold>Vendedor :</T></Caption>
                      <Select><T w={61}>Allan Castillo</T><Arrow d="M0 0h7L3.500 4z" w={7} h={4} color="#000" /></Select></Row>
                    <Row $h={19}><Caption><T w={65} bold link color="#0000c8">Nº. Cliente :</T></Caption>
                      <Field $w={115} $h={19} $plain $pad="0 0 0 1px"><T w={86}>2812110930010D</T></Field>
                      <SmallButton><Lens /></SmallButton></Row>
                    <Row $h={19}><Caption><T w={73} bold>Tipo Cliente :</T></Caption>
                      <Field $w={144}><T w={39}>Cedulas</T></Field></Row>
                  </Rows>
                  <ConsultButton><FolderLens /><T w={55} bold>Consultar</T></ConsultButton>
                </TopRows>
                <Row $h={19}><Caption $down={4}><T w={51} bold>Nombre :</T></Caption>
                  <Field $w={478}><T w={182}>YUBELKIS ELIZABETH TORRES ROJAS</T></Field></Row>
                <Row $h={19}><Caption $down={4}><T w={58} bold>Telf. Ofic. :</T></Caption>
                  <Field $w={107} $pad="0 0 2px 2px"><T w={73}>0000-0000 EXT</T></Field>
                  <InlineCaption $w={65}><T w={59} bold>Telf. Hab. :</T></InlineCaption>
                  <Field $w={108} $pad="0 0 2px 2px"><T w={73}>0000-0000 EXT</T></Field>
                  <InlineCaption $w={52}><T w={47} bold>Celular :</T></InlineCaption>
                  <Field $w={146} $pad="3px 0 0 2px"><T w={56}>8513-1650</T></Field></Row>
                <Row $h={20}><Caption $down={2}><T w={33} bold>Email:</T></Caption>
                  <Field $w={478} $pad="3px 0 0 2px"><T w={135}>torresyubelkis9@gmail.com/</T></Field></Row>
              </ClientForm>
              <ContactBox>
                <legend><T w={91}>Datos del contacto</T></legend>
                <ContactRow><ContactCaption><T w={51} bold>Nombre :</T></ContactCaption><Field $w={375} /></ContactRow>
                <ContactRow><ContactCaption><T w={45} bold>Correo :</T></ContactCaption><Field $w={375} /></ContactRow>
                <ContactRow><ContactCaption $in={2}><T w={43} bold>Celular:</T></ContactCaption><Field $w={165} />
                  <InlineCaption $w={74} $bare><T w={55} bold>Telefono :</T></InlineCaption><Field $w={136} /></ContactRow>
              </ContactBox>
            </FormArea>
          </ClientPanel>

          <Panes>
            <DealPane>
              <SectionHead $h={22} $bg="linear-gradient(90deg, #fff, #c3d0f0)">
                <HandPaper /><T w={319} bold color="#2250a4">1 oportunidade(s) - YUBELKIS ELIZABETH TORRES ROJAS.</T>
              </SectionHead>
              <Toolbar><Dots /><AddTable /><Props /></Toolbar>
              <List>
                <HeadRow>{columns.map(([t, tw, w], i) => <Cell key={t} $w={w} $head $end={i === 4}><T w={tw}>{t}</T></Cell>)}</HeadRow>
                <GroupRow><T w={139} size={12} color="#1d3f9f">ADONIS CUAREZMA(web)</T></GroupRow>
                <DataRow>{values.map(([t, tw, w, inset], i) => <Cell key={i} $w={w} $in={inset}><T w={tw}>{t}</T></Cell>)}</DataRow>
                <Grow />
                <ScrollBar>
                  <ScrollArrow><Arrow d="M4 0v7L0 3.500z" /></ScrollArrow>
                  <Thumb><Svg w={9} h={7} v="0 0 9 7"><path d="M1.500 0v7m3-7v7m3-7v7" stroke="#555" /></Svg></Thumb>
                  <Grow />
                  <ScrollArrow><Arrow d="M1 0v7l4-3.500z" /></ScrollArrow>
                </ScrollBar>
              </List>
            </DealPane>
            <CallPane>
              <SectionHead $h={22} $bg="linear-gradient(90deg, #fbfbf2, #f2f4dc 50%, #dce5b4)">
                <Agent /><T w={55} bold color="#505a26">Llamadas</T>
              </SectionHead>
              <Toolbar $r={1}><Dots /><AddTable /><Props /></Toolbar>
              <List $r={1}><Ruled /></List>
            </CallPane>
          </Panes>
        </Main>
      </Body>

      <StatusBar>
        <StatusItem $w={132} $gap={5}><DbIcon /><T w={60} bold color="#1b4384">ClientesCR</T></StatusItem>
        <StatusItem $w={90} $gap={6}><UserIcon /><T w={61} bold color="#1b4384">oalcantara</T></StatusItem>
      </StatusBar>

      <TaskBar>
        <Start><Orb /></Start>
        <TaskButton><IeIcon /></TaskButton>
        <TaskButton><OutlookIcon /></TaskButton>
        <TaskButton><ChromeIcon /></TaskButton>
        <TaskButton><NotesIcon /></TaskButton>
        <TaskButton $w={55} $mr={0}><RadarIcon /></TaskButton>
        <StackEdge />
        <TaskButton><WordIcon /></TaskButton>
        <TaskButton><PdfIcon /></TaskButton>
        <TaskButton $active><PcUser w={31} /></TaskButton>
        <Grow />
        <Tray>
          <TrayIcon $l={0} $b={6}><T w={13} color="#fff" font='"Open Sans", sans-serif'>ES</T></TrayIcon>
          <TrayIcon $l={18}><Arrow d="M0 4h8L4 0z" w={8} h={4} color="#fff" /></TrayIcon>
          <TrayIcon $l={12}><MIcon /></TrayIcon>
          <TrayIcon $l={9}><FlagIcon /></TrayIcon>
          <TrayIcon $l={8}><NetIcon /></TrayIcon>
          <Clock>
            <T w={54} color="#fff" lh={17} size={11.5} font='"Open Sans", sans-serif'>03:29 p.m.</T>
            <T w={58} color="#fff" lh={17} size={11.5} font='"Open Sans", sans-serif'>04/12/2020</T>
          </Clock>
          <PeekButton />
        </Tray>
      </TaskBar>
      <Strip>
        <StripTab $w={86} $line="#b9b9b9" $bg="#f1f0ee" />
        <StripTab $w={184} $line="#8299bb" $bg="#cddcf0" />
        <StripTab $w={135} $line="#8299bb" $bg="#cddcf0" />
        <StripTab $w={177} $line="#b9b9b9" $bg="#ece9e6" />
        <StripTab $w={738} $line="#b9b9b9" $bg="#ece9e6" />
        <StripTab $w={36} $line="#b9b9b9" $bg="#ece9e6" />
      </Strip>

      <Dialog>
        <DialogTitle><T w={106} color="#111">Mensaje del sistema</T></DialogTitle>
        <DialogBody>
          <DialogMessage>
            <ErrorIcon />
            <MessageText>
              <T w={308} lh={13} bold color="#fff">Imposible agregar una llamada, ya que el cliente no ha</T>
              <T w={93} lh={13} bold color="#fff">sido PROCESADO</T>
            </MessageText>
          </DialogMessage>
          <DialogFoot>
            <CopyIconSlot><CopyIcon /></CopyIconSlot>
            <AcceptButton><T w={38}>Aceptar</T></AcceptButton>
          </DialogFoot>
        </DialogBody>
      </Dialog>
      <Tip><T w={93} size={12} color="#555" font='"Open Sans", sans-serif'>Mostrar escritorio</T></Tip>
    </Screen>
  );
}
